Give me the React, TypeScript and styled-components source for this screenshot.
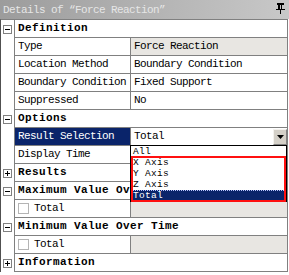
import React from "react";
import styled, { createGlobalStyle } from "styled-components";

const Global = createGlobalStyle`
  html, body {
    margin: 0;
    padding: 0;
    background: #fff;
  }
`;

type Prop = { name: string; value: string; readOnly?: boolean };

const definition: Prop[] = [
  { name: "Type", value: "Force Reaction", readOnly: true },
  { name: "Location Method", value: "Boundary Condition" },
  { name: "Boundary Condition", value: "Fixed Support" },
  { name: "Suppressed", value: "No" },
];

const choices = ["All", "X Axis", "Y Axis", "Z Axis", "Total"];

function PinIcon() {
  return (
    <svg width="9" height="11" viewBox="0 0 9 11">
      <rect x="1" y="0" width="7" height="2" fill="#000" />
      <rect x="2" y="2" width="2" height="4" fill="#000" />
      <rect x="5" y="2" width="1" height="4" fill="#000" />
      <rect x="0" y="6" width="9" height="1" fill="#000" />
      <rect x="4" y="7" width="1" height="4" fill="#000" />
    </svg>
  );
}

function Expander({ open }: { open: boolean }) {
  return (
    <Box>
      <svg width="7" height="7" viewBox="0 0 7 7">
        <rect x="1" y="3" width="5" height="1" fill="#000" />
        {!open && <rect x="3" y="1" width="1" height="5" fill="#000" />}
      </svg>
    </Box>
  );
}

function Section({ title, open }: { title: string; open: boolean }) {
  return (
    <Row>
      <Gutter>
        <Expander open={open} />
      </Gutter>
      <HeaderCell>{title}</HeaderCell>
    </Row>
  );
}

export default function App() {
  return (
    <>
      <Global />
      <Window>
        <TitleBar>
          <span>Details of “Force Reaction”</span>
          <PinIcon />
        </TitleBar>
        <Body>
          <Section title="Definition" open />
          {definition.map((p) => (
            <Row key={p.name}>
              <Gutter />
              <NameCell>{p.name}</NameCell>
              <ValueCell $readOnly={p.readOnly}>{p.value}</ValueCell>
            </Row>
          ))}
          <Section title="Options" open />
          <Row>
            <Gutter />
            <NameCell $selected>Result Selection</NameCell>
            <ValueCell $combo>
              <ComboText>Total</ComboText>
              <DropButton>
                <svg width="7" height="4" viewBox="0 0 7 4">
                  <path d="M0 0h7L3.5 4z" fill="#000" />
                </svg>
              </DropButton>
              <DropList>
                {choices.map((c) => (
                  <Choice key={c} $active={c === "Total"}>
                    {c}
                  </Choice>
                ))}
                <Marker />
              </DropList>
            </ValueCell>
          </Row>
          <Row>
            <Gutter />
            <NameCell>Display Time</NameCell>
            <ValueCell />
          </Row>
          <Section title="Results" open={false} />
          <Section title="Maximum Value Over Time" open />
          <Row>
            <Gutter />
            <NameCell>
              <Check />
              Total
            </NameCell>
            <ValueCell $readOnly />
          </Row>
          <Section title="Minimum Value Over Time" open />
          <Row>
            <Gutter />
            <NameCell>
              <Check />
              Total
            </NameCell>
            <ValueCell $readOnly />
          </Row>
          <Section title="Information" open={false} />
        </Body>
      </Window>
    </>
  );
}

const Window = styled.div`
  width: 289px;
  height: 275px;
  overflow: hidden;
  background: #fff;
  font-family: "Liberation Mono", "DejaVu Sans Mono", monospace;
  font-size: 11px;
  letter-spacing: -0.6px;
  color: #000;
`;

const TitleBar = styled.div`
  height: 19px;
  display: flex;
  align-items: center;
  justify-content: space-between;
  padding: 0 4px 0 3px;
  background: linear-gradient(to right, #9c9c9c, #c8c8c8);
  color: #e6e6e6;
  svg {
    margin-top: -2px;
  }
`;

const Body = styled.div`
  border-top: 1px solid #808080;
  border-left: 1px solid #505050;
  width: 288px;
  box-sizing: border-box;
`;

const Row = styled.div`
  display: flex;
  height: 18px;
`;

const Gutter = styled.div`
  width: 14px;
  flex: none;
  box-sizing: border-box;
  border-right: 1px solid #808080;
  display: flex;
  align-items: center;
  padding-left: 2px;
`;

const Box = styled.div`
  width: 9px;
  height: 9px;
  box-sizing: border-box;
  border: 1px solid #808080;
  background: #fff;
  display: flex;
`;

const Cell = styled.div`
  box-sizing: border-box;
  height: 18px;
  line-height: 17px;
  border-bottom: 1px solid #808080;
  border-right: 1px solid #808080;
  white-space: nowrap;
  overflow: hidden;
`;

const HeaderCell = styled(Cell)`
  width: 273px;
  padding-left: 3px;
  font-weight: bold;
  letter-spacing: 0.4px;
`;

const NameCell = styled(Cell)<{ $selected?: boolean }>`
  width: 116px;
  padding-left: 3px;
  display: flex;
  align-items: center;
  gap: 5px;
  background: ${(p) => (p.$selected ? "#0a246a" : "#fff")};
  color: ${(p) => (p.$selected ? "#fff" : "#000")};
`;

const ValueCell = styled(Cell)<{ $readOnly?: boolean; $combo?: boolean }>`
  width: 157px;
  padding-left: 3px;
  background: ${(p) => (p.$readOnly ? "#e8e6e2" : "#fff")};
  position: ${(p) => (p.$combo ? "relative" : "static")};
  overflow: ${(p) => (p.$combo ? "visible" : "hidden")};
  display: flex;
  align-items: center;
`;

const ComboText = styled.span`
  flex: 1;
`;

const DropButton = styled.div`
  width: 14px;
  height: 16px;
  box-sizing: border-box;
  background: #d4d0c8;
  border-top: 1px solid #f4f2ee;
  border-left: 1px solid #f4f2ee;
  border-right: 1px solid #808080;
  border-bottom: 1px solid #808080;
  display: flex;
  align-items: center;
  justify-content: center;
`;

const DropList = styled.div`
  position: absolute;
  top: 17px;
  left: -1px;
  width: 157px;
  height: 57px;
  box-sizing: border-box;
  border: 1px solid #000;
  background: #fff;
  z-index: 5;
`;

const Choice = styled.div<{ $active?: boolean }>`
  height: 11px;
  line-height: 10px;
  font-size: 9.5px;
  letter-spacing: 0.3px;
  padding-left: 2px;
  overflow: hidden;
  box-sizing: border-box;
  background: ${(p) => (p.$active ? "#0a246a" : "#fff")};
  color: ${(p) => (p.$active ? "#fff" : "#000")};
  border-top: ${(p) => (p.$active ? "1px dotted #b8c4ff" : "1px solid transparent")};
`;

const Marker = styled.div`
  position: absolute;
  top: 10px;
  left: 0;
  width: 155px;
  height: 46px;
  box-sizing: border-box;
  border: 2px solid #ff1010;
`;

const Check = styled.span`
  display: inline-block;
  width: 11px;
  height: 11px;
  box-sizing: border-box;
  border: 1px solid #b4b4b4;
  background: #fff;
  flex: none;
`;
